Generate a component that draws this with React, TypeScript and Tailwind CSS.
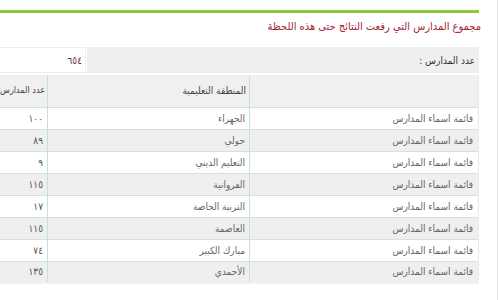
const rows = [
  { region: "الجهراء", count: "١٠٠" },
  { region: "حولي", count: "٨٩" },
  { region: "التعليم الديني", count: "٩" },
  { region: "الفروانية", count: "١١٥" },
  { region: "التربية الخاصة", count: "١٧" },
  { region: "العاصمة", count: "١١٥" },
  { region: "مبارك الكبير", count: "٧٤" },
  { region: "الأحمدي", count: "١٣٥" },
];

export default function App() {
  return (
    <div
      dir="rtl"
      className="w-[500px] h-[300px] overflow-hidden bg-white pr-[2px] font-['DejaVu_Sans_Condensed','DejaVu_Sans',sans-serif]"
    >
      <div className="h-full border-r border-[#e1ebee] pt-[10px]">
        {/* Panel */}
        <div className="mr-[18px] w-[497px] border-t-[3px] border-[#8dc63f]">
          {/* Title */}
          <div className="h-[28px] flex items-center -mr-[2px] text-[11px] text-[#a3263a] whitespace-nowrap">
            مجموع المدارس التي رفعت النتائج حتى هذه اللحظة
          </div>

          {/* Count */}
          <div className="mt-[6px] flex h-[26px] text-[10px]">
            <div className="w-[392px] shrink-0 bg-[#efefef] flex items-center pr-[4px] text-[#333]">
              عدد المدارس :
            </div>
            <div className="flex-1 mr-[1px] bg-white border border-[#ececec] flex items-center pr-[3px] text-[#6b2c3a]">
              ٦٥٤
            </div>
          </div>

          {/* Table */}
          <table className="mt-[2px] w-full table-fixed border-collapse text-[10px] border-b-2 border-[#eef2f3] whitespace-nowrap">
            <thead>
              <tr className="h-[32px] bg-[#f0f0f0] text-[#444]">
                <th className="w-[229px] font-normal text-right pr-[5px] border-r border-[#e4ecee]"></th>
                <th className="w-[202px] font-normal text-right pr-[3px] border-r border-[#c9dde3]">
                  المنطقة التعليمية
                </th>
                <th className="w-[66px] font-normal text-right pr-[2px] text-[9px] border-r border-[#c9dde3]">
                  عدد المدارس
                </th>
              </tr>
            </thead>
            <tbody>
              {rows.map((r, i) => (
                <tr
                  key={i}
                  className={
                    "h-[22px] border-t border-[#cfe1e6] text-[#666] " +
                    (i % 2 === 0 ? "bg-white" : "bg-[#efefef]")
                  }
                >
                  <td className="text-right pr-[5px] border-r border-[#e4ecee]">قائمة اسماء المدارس</td>
                  <td className="text-right pr-[4px] border-r border-[#c9dde3]">{r.region}</td>
                  <td className="text-right pr-[4px] border-r border-[#c9dde3] text-[#555]">{r.count}</td>
                </tr>
              ))}
            </tbody>
          </table>
        </div>
      </div>
    </div>
  );
}
